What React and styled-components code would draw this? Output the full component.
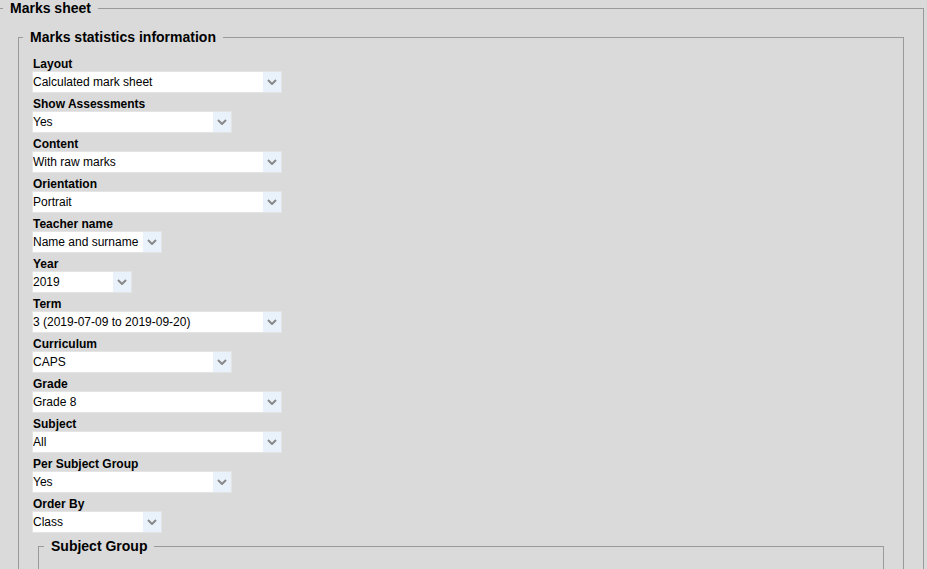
import React from 'react';
import styled, { createGlobalStyle } from 'styled-components';

const GlobalStyle = createGlobalStyle`
    html, body {
        margin: 0;
        padding: 0;
        background: #dadada;
        font-family: "Liberation Sans", Arial, sans-serif;
        color: #000;
        overflow: hidden;
    }
`;

const Page = styled.div`
    padding: 0 3px 0 0;
    margin-left: -2px;
`;

const Fieldset = styled.fieldset`
    margin: ${p => p.$margin || '0'};
    padding: ${p => p.$padding || '0'};
    border: 1px solid #9a9a9a;
    min-width: 0;
    min-height: ${p => p.$minHeight || 'auto'};
`;

const Legend = styled.legend`
    font-size: 14px;
    font-weight: bold;
    line-height: 16px;
    padding: 0 7px;
    margin-left: ${p => p.$offset};
`;

const Field = styled.div`
    margin-bottom: 2px;
`;

const Label = styled.label`
    display: block;
    font-size: 12px;
    font-weight: bold;
    line-height: 14px;
    padding: 2px 0 0 1px;
`;

const SelectWrap = styled.div`
    display: flex;
    box-sizing: border-box;
    width: ${p => p.$width}px;
    height: 22px;
    background: #fff;
    border: 1px solid #e4e4e4;
`;

const Select = styled.select`
    appearance: none;
    -webkit-appearance: none;
    flex: 1;
    min-width: 0;
    border: none;
    outline: none;
    background: transparent;
    font-family: "Liberation Sans", Arial, sans-serif;
    font-size: 12px;
    color: #000;
    padding: 0;
    margin: 0;
    height: 20px;
`;

const Arrow = styled.span`
    width: 18px;
    display: flex;
    align-items: center;
    justify-content: center;
    background: #e9f1fa;
`;

const fields = [
    { label: 'Layout', value: 'Calculated mark sheet', width: 250 },
    { label: 'Show Assessments', value: 'Yes', width: 200 },
    { label: 'Content', value: 'With raw marks', width: 250 },
    { label: 'Orientation', value: 'Portrait', width: 250 },
    { label: 'Teacher name', value: 'Name and surname', width: 130 },
    { label: 'Year', value: '2019', width: 100 },
    { label: 'Term', value: '3 (2019-07-09 to 2019-09-20)', width: 250 },
    { label: 'Curriculum', value: 'CAPS', width: 200 },
    { label: 'Grade', value: 'Grade 8', width: 250 },
    { label: 'Subject', value: 'All', width: 250 },
    { label: 'Per Subject Group', value: 'Yes', width: 200 },
    { label: 'Order By', value: 'Class', width: 130 },
];

const Chevron = () => (
    <svg width="10" height="6" viewBox="0 0 10 6">
        <path d="M1 1 L5 5 L9 1" fill="none" stroke="#888888" strokeWidth="2" />
    </svg>
);

const SelectField = ({ label, value, width }) => (
    <Field>
        <Label>{label}</Label>
        <SelectWrap $width={width}>
            <Select defaultValue={value}>
                <option>{value}</option>
            </Select>
            <Arrow><Chevron /></Arrow>
        </SelectWrap>
    </Field>
);

export default function App() {
    return (
        <Page>
            <GlobalStyle />
            <Fieldset $padding="13px 19px 0 19px">
                <Legend $offset="-15px">Marks sheet</Legend>
                <Fieldset $padding="10px 13px 0 13px">
                    <Legend $offset="-9px">Marks statistics information</Legend>
                    {fields.map(f => (
                        <SelectField key={f.label} {...f} />
                    ))}
                    <Fieldset $margin="5px 6px 0 6px" $padding="0 13px" $minHeight="80px">
                        <Legend $offset="-8px">Subject Group</Legend>
                    </Fieldset>
                </Fieldset>
            </Fieldset>
        </Page>
    );
}
